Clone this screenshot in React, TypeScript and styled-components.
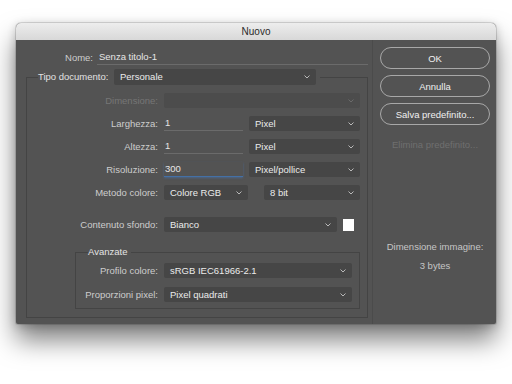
import React from "react";
import styled, { createGlobalStyle } from "styled-components";

const GlobalStyle = createGlobalStyle`
  body {
    margin: 0;
    background: #ffffff;
    font-family: "Liberation Sans", Arial, sans-serif;
  }
`;

const Page = styled.div`
  padding: 23px 0 60px 16px;
`;

const Window = styled.div`
  width: 480px;
  height: 301px;
  background: #535353;
  border-radius: 5px 5px 2px 2px;
  overflow: hidden;
  box-shadow: 0 16px 26px rgba(0, 0, 0, 0.5), 0 2px 10px rgba(0, 0, 0, 0.2),
    0 0 0 1px rgba(0, 0, 0, 0.12);
  display: flex;
  flex-direction: column;
`;

const TitleBar = styled.div`
  height: 17px;
  display: flex;
  align-items: center;
  justify-content: center;
  background: linear-gradient(#ededed, #d8d8d8);
  color: #2b2b2b;
  font-size: 10px;
`;

const Body = styled.div`
  flex: 1;
  display: flex;
`;

const LeftCol = styled.div`
  width: 356px;
  box-sizing: border-box;
  padding: 9px 4px 0 10px;
`;

const RightCol = styled.div`
  flex: 1;
  border-left: 1px solid #4b4b4b;
  padding: 7px 6px 0 7px;
  display: flex;
  flex-direction: column;
  align-items: stretch;
`;

const Row = styled.div<{ $gap?: number; $mt?: number }>`
  display: flex;
  align-items: center;
  height: 15px;
  gap: ${(p) => p.$gap ?? 6}px;
  margin-top: ${(p) => p.$mt ?? 0}px;
`;

const Label = styled.span<{ $w: number; $disabled?: boolean }>`
  width: ${(p) => p.$w}px;
  flex: none;
  text-align: right;
  font-size: 9.5px;
  color: ${(p) => (p.$disabled ? "#767676" : "#cdcdcd")};
  white-space: nowrap;
`;

const TextInput = styled.div<{ $w?: number; $focus?: boolean }>`
  width: ${(p) => (p.$w ? `${p.$w}px` : "auto")};
  flex: ${(p) => (p.$w ? "none" : "1")};
  height: 15px;
  box-sizing: border-box;
  padding-left: 1px;
  font-size: 9.5px;
  line-height: 14px;
  color: #e6e6e6;
  border-bottom: 1px solid ${(p) => (p.$focus ? "#4470a6" : "#6b6b6b")};
  box-shadow: ${(p) => (p.$focus ? "0 1px 2px rgba(70, 115, 180, 0.55)" : "none")};
`;

const SelectBox = styled.div<{ $w?: number; $h?: number; $disabled?: boolean }>`
  position: relative;
  width: ${(p) => (p.$w ? `${p.$w}px` : "auto")};
  flex: ${(p) => (p.$w ? "none" : "1")};
  height: ${(p) => p.$h ?? 15}px;
  box-sizing: border-box;
  padding: 0 14px 0 6px;
  display: flex;
  align-items: center;
  background: ${(p) => (p.$disabled ? "#4c4c4c" : "#464646")};
  border-radius: 2px;
  font-size: 9.5px;
  color: #ebebeb;
  white-space: nowrap;
`;

const Chevron = styled.svg<{ $dim?: boolean }>`
  position: absolute;
  right: 6px;
  top: 50%;
  margin-top: -2px;
  width: 6px;
  height: 4px;
  stroke: ${(p) => (p.$dim ? "#6a6a6a" : "#b9b9b9")};
`;

const Swatch = styled.div`
  width: 11px;
  height: 12px;
  background: #ffffff;
  flex: none;
`;

const Group = styled.fieldset<{ $ml?: number; $mt?: number; $pt: number; $pr: number; $pb: number }>`
  margin: ${(p) => p.$mt ?? 0}px 0 0 ${(p) => p.$ml ?? 0}px;
  padding: ${(p) => p.$pt}px ${(p) => p.$pr}px ${(p) => p.$pb}px 0;
  border: 1px solid #444444;
  min-inline-size: 0;
  display: flex;
  flex-direction: column;
`;

const Legend = styled.legend<{ $ml: number }>`
  margin-left: ${(p) => p.$ml}px;
  padding: 0 4px 0 0;
  font-size: 9.5px;
  line-height: 12px;
  color: #e4e4e4;
`;

const LegendRow = styled.div`
  display: flex;
  align-items: center;
  gap: 5px;
`;

const Rows = styled.div<{ $gap: number }>`
  display: flex;
  flex-direction: column;
  gap: ${(p) => p.$gap}px;
`;

const Spacer = styled.span<{ $w: number }>`
  width: ${(p) => p.$w}px;
  flex: none;
`;

const PillButton = styled.div`
  height: 22px;
  box-sizing: border-box;
  border: 1px solid #a8a8a8;
  border-radius: 11px;
  display: flex;
  align-items: center;
  justify-content: center;
  font-size: 9.5px;
  color: #f0f0f0;
  margin-bottom: 6px;
`;

const DisabledLink = styled.div`
  margin-top: 8px;
  text-align: center;
  font-size: 9.5px;
  line-height: 12px;
  color: #6f6f6f;
`;

const InfoText = styled.div<{ $mt: number }>`
  margin-top: ${(p) => p.$mt}px;
  text-align: center;
  font-size: 9.5px;
  line-height: 12px;
  color: #c6c6c6;
`;

function Select({ children, w, h, disabled }: { children?: React.ReactNode; w?: number; h?: number; disabled?: boolean }) {
  return (
    <SelectBox $w={w} $h={h} $disabled={disabled}>
      {children}
      <Chevron $dim={disabled} viewBox="0 0 6 4" fill="none" strokeWidth="1">
        <path d="M0.5 0.5 L3 3 L5.5 0.5" />
      </Chevron>
    </SelectBox>
  );
}

export default function App() {
  return (
    <>
      <GlobalStyle />
      <Page>
        <Window>
          <TitleBar>Nuovo</TitleBar>
          <Body>
            <LeftCol>
              <Row $gap={4} style={{ height: 16 }}>
                <Label $w={67}>Nome:</Label>
                <TextInput style={{ paddingLeft: 2 }}>Senza titolo-1</TextInput>
              </Row>
              <Group $mt={4} $pt={8} $pr={7} $pb={8}>
                <Legend $ml={11}>
                  <LegendRow>
                    <Label $w={71} style={{ textAlign: "left", color: "#e2e2e2" }}>
                      Tipo documento:
                    </Label>
                    <Select w={202} h={16}>Personale</Select>
                  </LegendRow>
                </Legend>
                <Rows $gap={8}>
                  <Row>
                    <Label $w={131} $disabled>Dimensione:</Label>
                    <Select disabled />
                  </Row>
                  <Row>
                    <Label $w={131}>Larghezza:</Label>
                    <TextInput $w={79}>1</TextInput>
                    <Select>Pixel</Select>
                  </Row>
                  <Row>
                    <Label $w={131}>Altezza:</Label>
                    <TextInput $w={79}>1</TextInput>
                    <Select>Pixel</Select>
                  </Row>
                  <Row>
                    <Label $w={131}>Risoluzione:</Label>
                    <TextInput $w={79} $focus>300</TextInput>
                    <Select>Pixel/pollice</Select>
                  </Row>
                  <Row>
                    <Label $w={131}>Metodo colore:</Label>
                    <Select w={84}>Colore RGB</Select>
                    <Spacer $w={4} />
                    <Select>8 bit</Select>
                  </Row>
                  <Row $mt={9}>
                    <Label $w={131}>Contenuto sfondo:</Label>
                    <Select w={173}>Bianco</Select>
                    <Swatch />
                  </Row>
                  <Group $ml={48} $mt={6} $pt={5} $pr={7} $pb={6}>
                    <Legend $ml={12}>Avanzate</Legend>
                    <Rows $gap={9}>
                      <Row>
                        <Label $w={82}>Profilo colore:</Label>
                        <Select>sRGB IEC61966-2.1</Select>
                      </Row>
                      <Row>
                        <Label $w={82}>Proporzioni pixel:</Label>
                        <Select>Pixel quadrati</Select>
                      </Row>
                    </Rows>
                  </Group>
                </Rows>
              </Group>
            </LeftCol>
            <RightCol>
              <PillButton>OK</PillButton>
              <PillButton>Annulla</PillButton>
              <PillButton>Salva predefinito...</PillButton>
              <DisabledLink>Elimina predefinito...</DisabledLink>
              <InfoText $mt={90}>Dimensione immagine:</InfoText>
              <InfoText $mt={7}>3 bytes</InfoText>
            </RightCol>
          </Body>
        </Window>
      </Page>
    </>
  );
}
